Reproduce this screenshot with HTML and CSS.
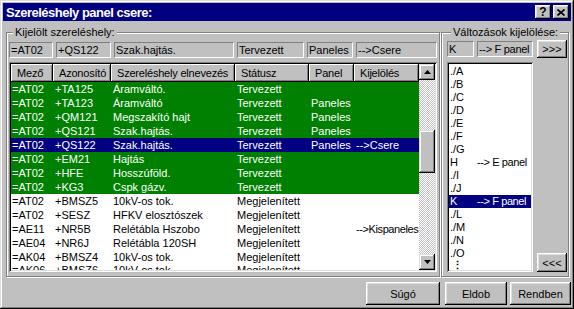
FILE: index.html
```html
<!DOCTYPE html>
<html lang="hu">
<head>
    <meta charset="UTF-8">
    <title>Szereléshely panel csere</title>
    <link rel="stylesheet" href="styles.css">
</head>
<body>
    <div class="window">
        <div class="titlebar">
            <span class="title">Szereléshely panel csere:</span>
            <div class="title-buttons">
                <span class="tbtn">?</span>
                <span class="tbtn">
                    <svg width="8" height="7" viewBox="0 0 8 7"><path d="M0.5 0.5 L7.5 6.5 M7.5 0.5 L0.5 6.5" stroke="#000" stroke-width="1.7" fill="none"/></svg>
                </span>
            </div>
        </div>

        <div class="panels">
            <div class="group group-main">
                <div class="group-title">Kijelölt szereléshely:</div>
                <div class="fields">
                    <div class="field f1">=AT02</div>
                    <div class="field f2">+QS122</div>
                    <div class="field f3">Szak.hajtás.</div>
                    <div class="field f4">Tervezett</div>
                    <div class="field f5">Paneles</div>
                    <div class="field f6">--&gt;Csere</div>
                </div>

                <div class="table">
                    <div class="grid">
                        <div class="head">
                            <span>Mező</span>
                            <span>Azonosító</span>
                            <span>Szereléshely elnevezés</span>
                            <span>Státusz</span>
                            <span>Panel</span>
                            <span>Kijelölés</span>
                        </div>
                        <div class="row green"><span>=AT02</span><span>+TA125</span><span>Áramváltó.</span><span>Tervezett</span><span></span><span></span></div>
                        <div class="row green"><span>=AT02</span><span>+TA123</span><span>Áramváltó</span><span>Tervezett</span><span>Paneles</span><span></span></div>
                        <div class="row green"><span>=AT02</span><span>+QM121</span><span>Megszakító hajt</span><span>Tervezett</span><span>Paneles</span><span></span></div>
                        <div class="row green"><span>=AT02</span><span>+QS121</span><span>Szak.hajtás.</span><span>Tervezett</span><span>Paneles</span><span></span></div>
                        <div class="row selected"><span>=AT02</span><span>+QS122</span><span>Szak.hajtás.</span><span>Tervezett</span><span>Paneles</span><span>--&gt;Csere</span></div>
                        <div class="row green"><span>=AT02</span><span>+EM21</span><span>Hajtás</span><span>Tervezett</span><span></span><span></span></div>
                        <div class="row green"><span>=AT02</span><span>+HFE</span><span>Hosszúföld.</span><span>Tervezett</span><span></span><span></span></div>
                        <div class="row green"><span>=AT02</span><span>+KG3</span><span>Cspk gázv.</span><span>Tervezett</span><span></span><span></span></div>
                        <div class="row"><span>=AT02</span><span>+BMSZ5</span><span>10kV-os tok.</span><span>Megjelenített</span><span></span><span></span></div>
                        <div class="row"><span>=AT02</span><span>+SESZ</span><span>HFKV elosztószek</span><span>Megjelenített</span><span></span><span></span></div>
                        <div class="row"><span>=AE11</span><span>+NR5B</span><span>Relétábla Hszobo</span><span>Megjelenített</span><span></span><span class="tight">--&gt;Kispaneles</span></div>
                        <div class="row"><span>=AE04</span><span>+NR6J</span><span>Relétábla 120SH</span><span>Megjelenített</span><span></span><span></span></div>
                        <div class="row"><span>=AK04</span><span>+BMSZ4</span><span>10kV-os tok.</span><span>Megjelenített</span><span></span><span></span></div>
                        <div class="row partial"><span>=AK06</span><span>+BMSZ6</span><span>10kV-os tok.</span><span>Megjelenített</span><span></span><span></span></div>
                    </div>
                    <div class="scrollbar">
                        <div class="sb-btn">
                            <svg width="7" height="4" viewBox="0 0 7 4"><path d="M3.5 0 L7 4 L0 4 Z" fill="#000"/></svg>
                        </div>
                        <div class="sb-track">
                            <div class="sb-thumb"></div>
                        </div>
                        <div class="sb-btn">
                            <svg width="7" height="4" viewBox="0 0 7 4"><path d="M0 0 L7 0 L3.5 4 Z" fill="#000"/></svg>
                        </div>
                    </div>
                </div>
            </div>

            <div class="group group-side">
                <div class="group-title">Változások kijelölése:</div>
                <div class="side-top">
                    <div class="field k">K</div>
                    <div class="field fp">--&gt; F panel</div>
                    <div class="btn small">&gt;&gt;&gt;</div>
                </div>
                <div class="side-body">
                    <div class="listbox">
                        <div class="list">
                            <div class="item">./A</div>
                            <div class="item">./B</div>
                            <div class="item">./C</div>
                            <div class="item">./D</div>
                            <div class="item">./E</div>
                            <div class="item">./F</div>
                            <div class="item">./G</div>
                            <div class="item"><span class="key">H</span><span class="tight">--&gt; E panel</span></div>
                            <div class="item">./I</div>
                            <div class="item">./J</div>
                            <div class="item active"><span class="key">K</span><span class="tight">--&gt; F panel</span></div>
                            <div class="item">./L</div>
                            <div class="item">./M</div>
                            <div class="item">./N</div>
                            <div class="item">./O</div>
                            <div class="item dots">⋮</div>
                        </div>
                    </div>
                    <div class="side-col">
                        <div class="btn small back">&lt;&lt;&lt;</div>
                    </div>
                </div>
            </div>
        </div>

        <div class="actions">
            <div class="btn help">Súgó</div>
            <div class="btn discard">Eldob</div>
            <div class="btn ok">Rendben</div>
        </div>
    </div>
</body>
</html>
```

FILE: styles.css
```css
* {
    box-sizing: border-box;
}

body {
    margin: 0;
    background-color: #c0c0c0;
    font-family: 'Liberation Sans', Arial, sans-serif;
    font-size: 11px;
    color: #000000;
}

.window {
    width: 574px;
    height: 309px;
    padding: 3px;
    background-color: #c0c0c0;
    box-shadow: inset -1px -1px #000000, inset 1px 1px #dfdfdf,
                inset -2px -2px #808080, inset 2px 2px #ffffff;
    display: flex;
    flex-direction: column;
}

/* title bar */
.titlebar {
    height: 18px;
    background-color: #000080;
    color: #ffffff;
    display: flex;
    align-items: center;
    justify-content: space-between;
    padding: 0 2px 0 3px;
}

.title {
    font-weight: bold;
    font-size: 13px;
    letter-spacing: -0.5px;
}

.title-buttons {
    display: flex;
    gap: 2px;
}

.tbtn {
    width: 16px;
    height: 14px;
    background-color: #c0c0c0;
    color: #000000;
    font-weight: bold;
    font-size: 12px;
    display: flex;
    align-items: center;
    justify-content: center;
    box-shadow: inset -1px -1px #000000, inset 1px 1px #ffffff,
                inset -2px -2px #808080, inset 2px 2px #dfdfdf;
}

/* group boxes */
.panels {
    display: flex;
    gap: 1px;
    margin-top: 11px;
    padding-left: 3px;
}

.group {
    border: 1px solid #808080;
    box-shadow: 1px 1px #ffffff, inset 1px 1px #ffffff;
    display: flex;
    flex-direction: column;
    padding-bottom: 4px;
}

.group-main {
    width: 434px;
    padding-left: 2px;
    padding-right: 2px;
}

.group-side {
    width: 128px;
    padding-left: 5px;
    padding-right: 1px;
}

.group-title {
    align-self: flex-start;
    margin: -7px 0 0 4px;
    padding: 0 2px;
    line-height: 13px;
    background-color: #c0c0c0;
}

.field {
    height: 16px;
    line-height: 14px;
    padding-left: 1px;
    border: 1px solid;
    border-color: #808080 #ffffff #ffffff #808080;
    white-space: nowrap;
    overflow: hidden;
}

.fields {
    display: flex;
    gap: 3px;
    margin-top: 3px;
}

.f1 { width: 44px; }
.f2 { width: 55px; }
.f3 { width: 120px; }
.f4 { width: 67px; }
.f5 { width: 46px; }
.f6 { flex: 1; }

/* list view */
.table {
    margin-top: 4px;
    height: 210px;
    padding: 2px;
    display: flex;
    box-shadow: inset 1px 1px #808080, inset -1px -1px #ffffff,
                inset 2px 2px #000000, inset -2px -2px #dfdfdf;
}

.grid {
    flex: 1;
    background-color: #ffffff;
    overflow: hidden;
}

.head,
.row {
    display: grid;
    grid-template-columns: 42px 58px 124px 74px 45px 65px;
    white-space: nowrap;
}

.head {
    height: 18px;
    background-color: #c0c0c0;
}

.head span {
    line-height: 18px;
    padding-left: 6px;
    letter-spacing: -0.2px;
    overflow: hidden;
    box-shadow: inset -1px -1px #000000, inset 1px 1px #ffffff,
                inset -2px -2px #808080;
}

.row {
    height: 14px;
    line-height: 14px;
}

.row span {
    padding-left: 2px;
    overflow: hidden;
}

.row span:first-child {
    padding-left: 1px;
}

.row.partial {
    line-height: 12px;
}

.tight {
    letter-spacing: -0.4px;
}

.row.green {
    background-color: #008000;
    color: #ffffff;
}

.row.selected {
    background-color: #000080;
    color: #ffffff;
}

.scrollbar {
    width: 16px;
    display: flex;
    flex-direction: column;
}

.sb-btn {
    height: 16px;
    background-color: #c0c0c0;
    display: flex;
    align-items: center;
    justify-content: center;
    box-shadow: inset -1px -1px #000000, inset 1px 1px #dfdfdf,
                inset -2px -2px #808080, inset 2px 2px #ffffff;
}

.sb-track {
    flex: 1;
    padding-top: 50px;
    background-image: repeating-conic-gradient(#ffffff 0 25%, #c0c0c0 0 50%);
    background-size: 2px 2px;
}

.sb-thumb {
    height: 43px;
    background-color: #c0c0c0;
    box-shadow: inset -1px -1px #000000, inset 1px 1px #dfdfdf,
                inset -2px -2px #808080, inset 2px 2px #ffffff;
}

/* right side */
.side-top {
    display: flex;
    align-items: center;
    height: 18px;
    margin-top: 1px;
}

.k {
    width: 27px;
}

.fp {
    flex: 1;
    margin: 0 4px 0 3px;
    letter-spacing: -0.3px;
}

.btn {
    background-color: #c0c0c0;
    display: flex;
    align-items: center;
    justify-content: center;
    box-shadow: inset -1px -1px #000000, inset 1px 1px #ffffff,
                inset -2px -2px #808080, inset 2px 2px #dfdfdf;
}

.btn.small {
    width: 30px;
    height: 18px;
}

.btn.back {
    height: 19px;
}

.side-body {
    display: flex;
    height: 210px;
    margin-top: 4px;
}

.listbox {
    width: 86px;
    padding: 2px;
    display: flex;
    box-shadow: inset 1px 1px #808080, inset -1px -1px #ffffff,
                inset 2px 2px #000000, inset -2px -2px #dfdfdf;
}

.list {
    flex: 1;
    background-color: #ffffff;
    padding-top: 1px;
    overflow: hidden;
}

.item {
    height: 13px;
    line-height: 13px;
    padding-left: 1px;
    white-space: nowrap;
}

.item .key {
    display: inline-block;
    width: 27px;
}

.item.active {
    background-color: #000080;
    color: #ffffff;
}

.item.dots {
    font-weight: bold;
    line-height: 10px;
    padding-left: 3px;
}

.side-col {
    flex: 1;
    display: flex;
    flex-direction: column;
    justify-content: flex-end;
    align-items: flex-end;
}

/* bottom buttons */
.actions {
    display: flex;
    justify-content: flex-end;
    margin-top: 5px;
}

.actions .btn {
    height: 23px;
}

.help {
    width: 74px;
}

.discard {
    width: 62px;
    margin-left: 5px;
}

.ok {
    width: 61px;
    margin-left: 3px;
}
```
